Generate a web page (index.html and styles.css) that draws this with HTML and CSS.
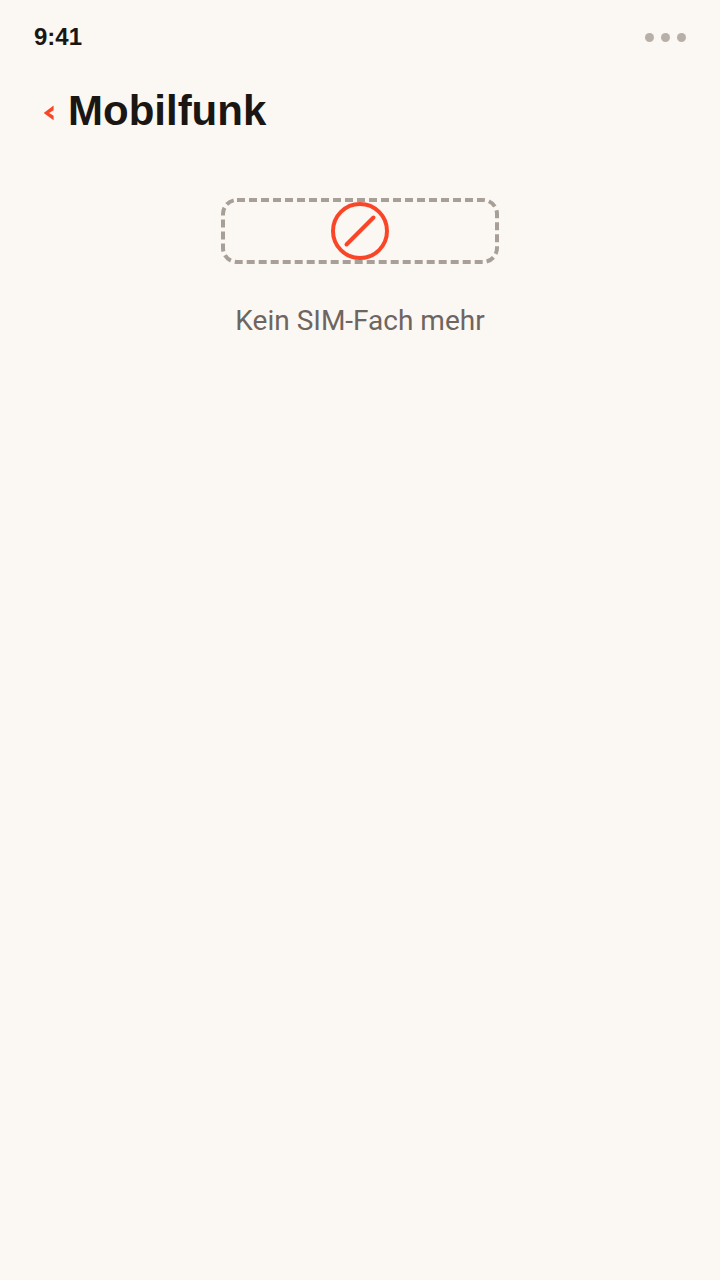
FILE: index.html
```html
<!DOCTYPE html>
<html lang="de">
<head>
    <meta charset="UTF-8">
    <meta name="viewport" content="width=device-width, initial-scale=1">
    <title>Mobilfunk</title>
    <link rel="stylesheet" href="styles.css">
</head>
<body>
    <div class="status-bar">
        <span class="time">9:41</span>
        <div class="dots">
            <span></span>
            <span></span>
            <span></span>
        </div>
    </div>

    <header class="header">
        <button class="back-btn" type="button" aria-label="Zurück">
            <svg width="10" height="16" viewBox="0 0 10 16"><path d="M9.6 0.6V5.2L5.2 8L9.6 10.8V15.2L0 8.2V7.8Z" fill="#fa4628"/></svg>
        </button>
        <h1>Mobilfunk</h1>
    </header>

    <main class="content">
        <!-- SIM-Fach -->
        <svg class="sim-tray" width="278" height="66" viewBox="0 0 278 66" fill="none" stroke-width="4" aria-hidden="true">
            <rect x="2" y="2" width="274" height="62" rx="14" stroke="#a8a098" stroke-dasharray="8 4"/>
            <circle cx="139" cy="33" r="27" stroke="#fa4628"/>
            <path d="M125.5 46.5L152.5 19.5" stroke="#fa4628" stroke-linecap="round"/>
        </svg>
        <p class="message">Kein SIM-Fach mehr</p>
    </main>
</body>
</html>
```
FILE: styles.css
```css
* {
    box-sizing: border-box;
}
body {
    margin: 0;
    min-height: 100vh;
    font-family: "Liberation Sans", Arial, sans-serif;
    background-color: #fbf8f3;
    color: #1a1613;
}
.status-bar {
    display: flex;
    justify-content: space-between;
    align-items: center;
    height: 74px;
    padding: 0 34px;
}
.time {
    font-size: 24px;
    font-weight: bold;
}
.dots {
    display: flex;
    gap: 7px;
}
.dots span {
    width: 9px;
    height: 9px;
    border-radius: 50%;
    background-color: #b8b0a8;
}
.header {
    display: flex;
    align-items: center;
    gap: 14px;
    padding: 13px 44px 11px;
}
.back-btn {
    display: flex;
    padding: 4px 0 0;
    border: none;
    background: none;
    cursor: pointer;
}
h1 {
    margin: 0;
    font-size: 42px;
    line-height: 48px;
}
.content {
    display: flex;
    flex-direction: column;
    align-items: center;
    gap: 41px;
    padding: 52px 32px;
}
.message {
    margin: 0;
    font-family: Roboto, "Liberation Sans", sans-serif;
    font-size: 28px;
    line-height: 32px;
    color: #6e6560;
}
```
